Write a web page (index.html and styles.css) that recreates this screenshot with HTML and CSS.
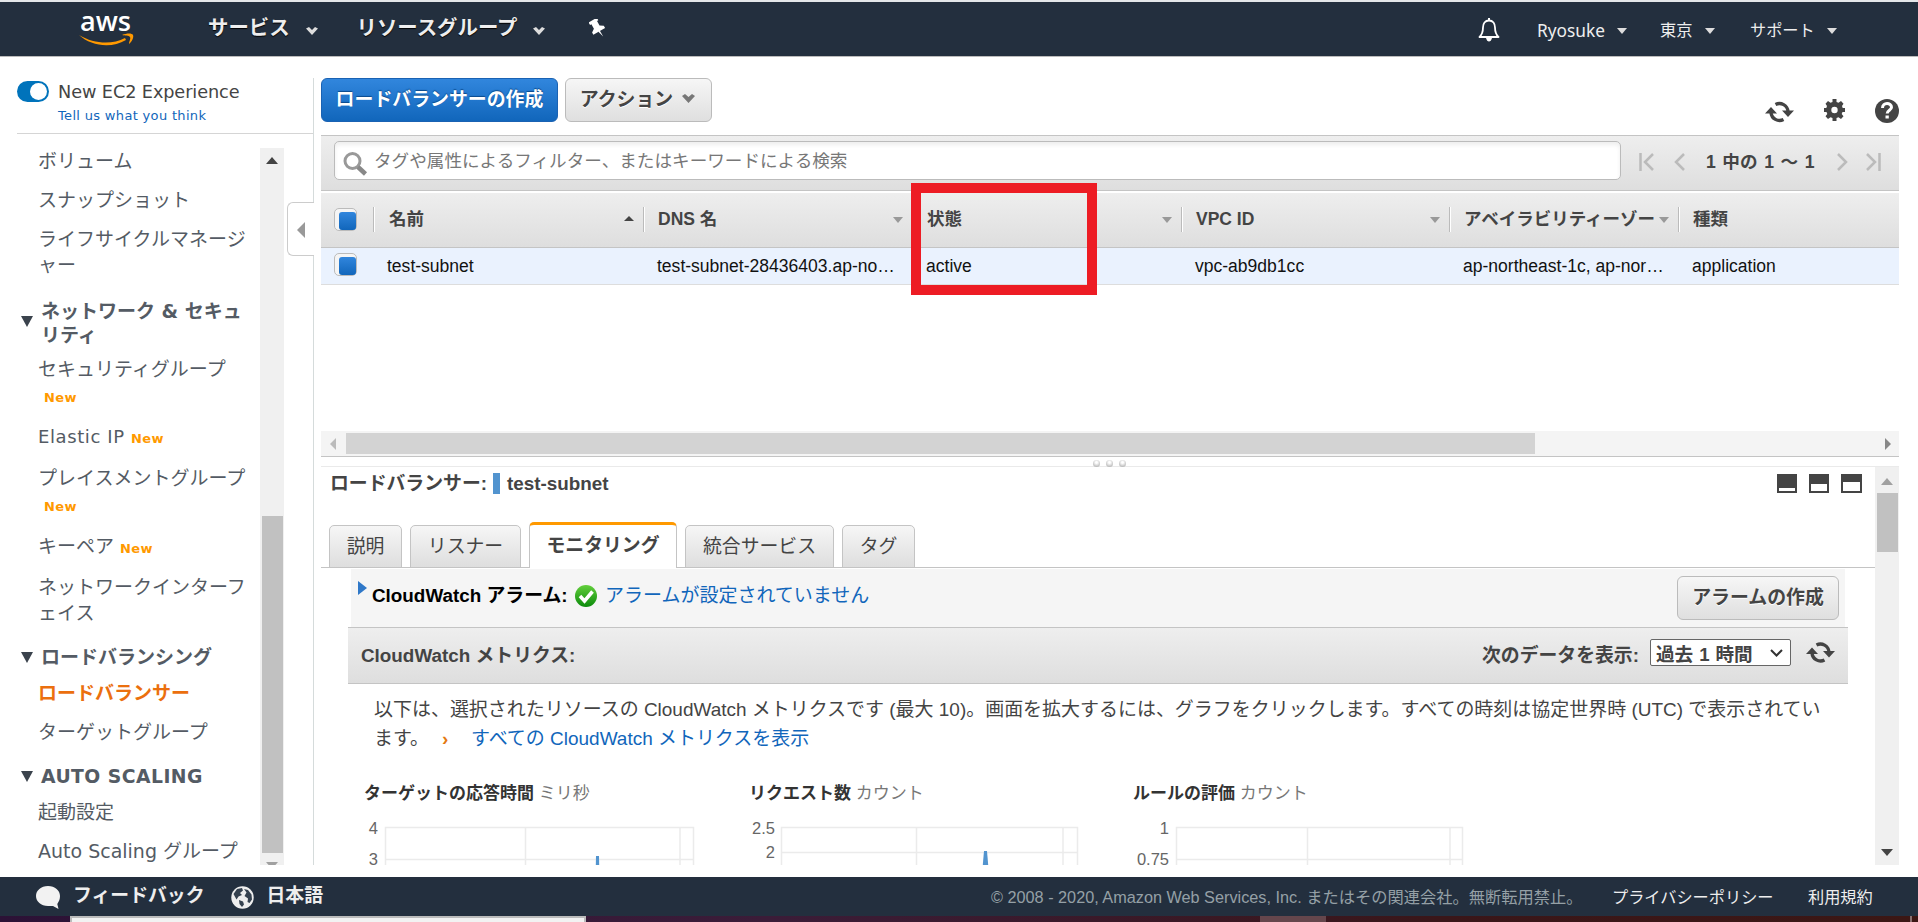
FILE: index.html
```html
<!DOCTYPE html>
<html lang="ja">
<head>
<meta charset="utf-8">
<title>EC2 Management Console</title>
<link rel="stylesheet" href="styles.css">
</head>
<body>
<svg class="defs" width="0" height="0">
  <defs>
    <linearGradient id="glow" x1="0" y1="0" x2="0" y2="1"><stop offset="0" stop-color="#63cf3c"/><stop offset="1" stop-color="#0b8a0b"/></linearGradient>
    <symbol id="refresh" viewBox="0 0 29 22">
      <path d="M10.500 3.500A8.600 8.600 0 0 1 23 10.500M18.500 18.500A8.600 8.600 0 0 1 6 11.500" fill="none" stroke="#444" stroke-width="3.300"/>
      <path d="M0 12.500 6 6l6 6.500zM17 9.500h12L23 16z" fill="#444"/>
    </symbol>
    <symbol id="down" viewBox="0 0 12 8"><path d="M0 1.500 3 0 6 3 9 0 12 1.500 6 8z" fill="#ddd"/></symbol>
  </defs>
</svg>

<header class="nav">
  <svg class="aws" width="56" height="33" viewBox="0 0 56 33">
    <text class="aws-word" x="1" y="18" textLength="51" lengthAdjust="spacingAndGlyphs">aws</text>
    <path d="M0 22c15 9 33 10 46 3l1 2C32 36 12 33 0 22z" fill="#f90"/>
    <path d="M43 22c5-2 10-2 11 0s-1 7-4 9c0-3 2-5 1-7s-5-1-8-2z" fill="#f90"/>
  </svg>
  <div class="menu">サービス<svg width="12" height="8"><use href="#down"/></svg></div>
  <div class="menu menu2">リソースグループ<svg width="12" height="8"><use href="#down"/></svg></div>
  <svg class="pin" width="18" height="20" viewBox="0 0 18 20"><g transform="rotate(-30 8 9)" fill="#fff"><path d="M3.500 0h9.500v3h-1.500v5l3.500 2.500V13H1.500v-2.500L5 8V3H3.500z"/><path d="M7.300 12.500h1.800v7z"/></g></svg>
  <span class="grow"></span>
  <svg class="bell" width="22" height="24" viewBox="0 0 22 24"><path d="M11 2.500c-4 0-6 3-6 7 0 5-1 7-3.500 9.500h19c-2.500-2.500-3.500-4.500-3.500-9.500 0-4-2-7-6-7z" fill="none" stroke="#fff" stroke-width="1.8" stroke-linejoin="round"/><path d="M10 0h2v3h-2zM8 20h6q-1 3.500-3 3.500T8 20z" fill="#fff"/></svg>
  <div class="umenu u1"><span>Ryosuke</span><i></i></div>
  <div class="umenu u2"><span>東京</span><i></i></div>
  <div class="umenu u3"><span>サポート</span><i></i></div>
</header>

<main class="main">
  <aside class="side">
    <div class="exp">
      <span class="toggle"><b></b></span>
      <div><div class="exp-t">New EC2 Experience</div><div class="exp-l">Tell us what you think</div></div>
    </div>
    <div class="side-body">
      <nav class="tree">
        <div class="it h39">ボリューム</div>
        <div class="it h39">スナップショット</div>
        <div class="it two">ライフサイクルマネージ<br>ャー</div>
        <div class="grp g2"><i></i><span>ネットワーク &amp; セキュ<br>リティ</span></div>
        <div class="it h35">セキュリティグループ</div>
        <div class="nw">New</div>
        <div class="it h40">Elastic IP <em>New</em></div>
        <div class="it h35">プレイスメントグループ</div>
        <div class="nw n2">New</div>
        <div class="it h39">キーペア <em>New</em></div>
        <div class="it two t2">ネットワークインターフ<br>ェイス</div>
        <div class="grp g3"><i></i><span>ロードバランシング</span></div>
        <div class="it h39 on">ロードバランサー</div>
        <div class="it h39">ターゲットグループ</div>
        <div class="grp g4"><i></i><span class="latin">AUTO SCALING</span></div>
        <div class="it h39">起動設定</div>
        <div class="it h39">Auto Scaling グループ</div>
      </nav>
      <div class="vbar side-bar"><i class="up dark"></i><b></b><i class="dn"></i></div>
    </div>
    <div class="handle"><i></i></div>
  </aside>

  <section class="work">
    <div class="tools">
      <button class="btn blue">ロードバランサーの作成</button>
      <button class="btn act">アクション<svg width="13" height="9" viewBox="0 0 13 9"><path d="M0 2 3 0 6.500 3 10 0 13 2 6.500 9z" fill="#777"/></svg></button>
      <span class="grow"></span>
      <div class="ticons">
        <svg width="29" height="22"><use href="#refresh"/></svg>
        <svg class="gear" width="21" height="22" viewBox="0 0 21 22"><path fill="#444" fill-rule="evenodd" d="M8.500 0h4v3l2 .8L17 2l2.500 2.700L18 7l.700 2H21v4h-2.500l-.8 2 1.800 2.300L17 20l-2.500-1.800-2 .8v3h-4v-3l-2-.8L4 20l-2.500-2.700L3.300 15l-.8-2H0V9h2.300L3 7 1.500 4.700 4 2l2.500 1.800 2-.8zM10.500 7.800a3.200 3.200 0 1 0 0 6.400 3.200 3.200 0 0 0 0-6.400z"/></svg>
        <svg width="24" height="24" viewBox="0 0 24 24"><circle cx="12" cy="12" r="12" fill="#444"/><path d="M7.500 9c0-6 9-5.500 9-.8 0 3-4.300 3-4.300 6.300" fill="none" stroke="#fff" stroke-width="3"/><path d="M10.500 16.500h3.300v3h-3.300z" fill="#fff"/></svg>
      </div>
    </div>

    <div class="filter">
      <div class="search">
        <svg width="25" height="24" viewBox="0 0 25 24"><circle cx="9.500" cy="9" r="7.500" fill="none" stroke="#999" stroke-width="3"/><path d="m15 15 7.500 7" stroke="#888" stroke-width="4.500"/></svg>
        <span>タグや属性によるフィルター、またはキーワードによる検索</span>
      </div>
      <svg class="pg" width="47" height="18" viewBox="0 0 47 18" fill="none" stroke="#bbb" stroke-width="2.500"><path d="M1.500 0v18M14 1 6 9l8 8M45 1l-8 8 8 8"/></svg>
      <span class="pgt">1 中の 1 ～ 1</span>
      <svg class="pg" width="44" height="18" viewBox="0 0 44 18" fill="none" stroke="#bbb" stroke-width="2.500"><path d="m1 1 8 8-8 8M30 1l8 8-8 8M42.500 0v18"/></svg>
    </div>

    <div class="row head">
      <div class="ck"><i></i></div>
      <div class="c">名前<i class="up"></i></div>
      <div class="c">DNS 名<i class="dn"></i></div>
      <div class="c">状態<i class="dn"></i></div>
      <div class="c">VPC ID<i class="dn"></i></div>
      <div class="c">アベイラビリティーゾー<i class="dn"></i></div>
      <div class="c">種類</div>
      <div class="mark"></div>
    </div>
    <div class="row data">
      <div class="ck"><i></i></div>
      <div class="c">test-subnet</div>
      <div class="c">test-subnet-28436403.ap-no…</div>
      <div class="c">active</div>
      <div class="c">vpc-ab9db1cc</div>
      <div class="c">ap-northeast-1c, ap-nor…</div>
      <div class="c">application</div>
    </div>
    <div class="blank"></div>
    <div class="hbar"><i class="lf"></i><b></b><span class="grow"></span><i class="rt"></i></div>
    <div class="split"><i></i><i></i><i></i></div>

    <div class="detail">
      <div class="pane">
        <div class="title">
          <span class="tt">ロードバランサー:</span><b class="chip"></b><span class="tn">test-subnet</span>
          <span class="grow"></span>
          <div class="wins"><i class="w1"></i><i class="w2"></i><i class="w3"></i></div>
        </div>
        <div class="tabs">
          <div class="tab a">説明</div><div class="tab b">リスナー</div><div class="tab on">モニタリング</div><div class="tab d">統合サービス</div><div class="tab a">タグ</div>
        </div>
        <div class="alarm">
          <i class="exp-i"></i>
          <strong>CloudWatch アラーム:</strong>
          <svg width="22" height="22" viewBox="0 0 22 22"><circle cx="11" cy="11" r="11" fill="url(#glow)"/><path d="m5 11 4.500 5L17.500 6.500" fill="none" stroke="#fff" stroke-width="3.500"/></svg>
          <a>アラームが設定されていません</a>
          <span class="grow"></span>
          <button class="btn mk">アラームの作成</button>
        </div>
        <div class="mbar">
          <span>CloudWatch メトリクス:</span><span class="grow"></span><span>次のデータを表示:</span>
          <div class="sel">過去 1 時間<svg width="13" height="8" viewBox="0 0 13 8"><path d="m1 1 5.500 5.500L12 1" fill="none" stroke="#333" stroke-width="2"/></svg></div>
          <svg width="29" height="23"><use href="#refresh"/></svg>
        </div>
        <div class="note"><p class="p1">以下は、選択されたリソースの CloudWatch メトリクスです (最大 10)。画面を拡大するには、グラフをクリックします。すべての時刻は協定世界時 (UTC) で表示されてい</p><p class="p2">ます。<b>›</b><a>すべての CloudWatch メトリクスを表示</a></p></div>
        <div class="charts">
          <div class="chart c1"><h4>ターゲットの応答時間 <small>ミリ秒</small></h4>
            <svg width="345" height="60"><g class="grid"><path d="M21.500 60V7.500h308V60M161.500 7v53M316 7v53M21.500 39.500h308"/></g><path class="spk" d="m231.500 60 .5-24h3l.5 24z"/><text x="14" y="14">4</text><text x="14" y="45">3</text></svg></div>
          <div class="chart c2"><h4>リクエスト数 <small>カウント</small></h4>
            <svg width="345" height="60"><g class="grid"><path d="M32.500 60V7.500h296V60M167.500 7v53M314 7v53M32.500 32.500h296"/></g><path class="spk" d="m232.500 60 2.500-29h3l2.500 29z"/><text x="26" y="14">2.5</text><text x="26" y="38">2</text></svg></div>
          <div class="chart c3"><h4>ルールの評価 <small>カウント</small></h4>
            <svg width="345" height="60"><g class="grid"><path d="M42.500 60V7.500h286V60M173.500 7v53M316 7v53M42.500 39.500h286"/></g><text x="35" y="14">1</text><text x="35" y="45">0.75</text></svg></div>
        </div>
      </div>
      <div class="vbar det-bar"><i class="up"></i><b></b><span class="grow"></span><i class="dn dark"></i></div>
    </div>
  </section>
</main>

<footer class="foot">
  <svg width="24" height="23" viewBox="0 0 24 23"><path d="M12 0C5 0 0 4.500 0 10s5 10 12 10c2 0 4 0 5 0l5.500 3-1.200-5C23 15.500 24 13 24 10 24 4.500 19 0 12 0z" fill="#f2f2f2"/></svg>
  <span class="fb">フィードバック</span>
  <svg class="globe" width="23" height="23" viewBox="0 0 23 23"><circle cx="11.500" cy="11.500" r="11.200" fill="#eee"/><path d="M2.500 8 6 3l5-1 1 2.500L9 7l2 2-3.500 1.500-2 3zM13 3l4 1 3.500 4.500.5 5-2.500 3.500-2-1 .5-3.500-3.500-2.500 2-3.500zM8 14l4 1.500 1 3-2 2.500-2.500-3z" fill="#35414f"/></svg>
  <span class="lang">日本語</span>
  <span class="grow"></span>
  <span class="copy">© 2008 - 2020, Amazon Web Services, Inc. またはその関連会社。無断転用禁止。</span>
  <span class="pp">プライバシーポリシー</span>
  <span class="tos">利用規約</span>
</footer>
<div class="desk"><i class="dk1"></i><i class="dk2"></i><i class="dk3"></i></div>
</body>
</html>
```
FILE: styles.css
```css
* { box-sizing: border-box; }
body { margin: 0; width: 1918px; height: 922px; overflow: hidden; display: flex; flex-direction: column; background: #fff; color: #444; font-family: "Liberation Sans", "Noto Sans CJK JP", sans-serif; font-size: 18.850px; white-space: nowrap; }
.defs { position: absolute; }
svg, i { display: block; flex: none; }
.grow { flex: 1; }
p, h4 { margin: 0; }
a { color: #1166bb; }

/* top navigation */
.nav { height: 57px; flex: none; display: flex; align-items: flex-start; background: #232f3e; border-top: 2px solid #e4e6e9; border-bottom: 1px solid #bbb; padding-left: 79px; }
.aws { margin-top: 11px; overflow: visible; }
.aws-word { font: 600 27px "Open Sans", sans-serif; fill: #fff; }
.menu { display: flex; font-weight: bold; font-size: 20.400px; line-height: 53px; height: 53px; color: #eee; margin-left: 73px; text-shadow: 0 1px 1px #000; }
.menu svg { margin: 25px 0 0 16px; }
.menu2 { margin-left: 39px; }
.pin { margin: 17px 0 0 44px; }
.bell { margin: 16px 37px 0 0; }
.umenu { display: flex; font-size: 16.200px; line-height: 57px; height: 54px; color: #eee; font-family: "Noto Sans", "Noto Sans CJK JP", sans-serif; }
.umenu i { border: 5px solid transparent; border-top: 6px solid #ddd; border-bottom: 0; margin-top: 26px; height: 6px; }
.u1 { width: 123px; } .u1 span { width: 80px; font-size: 17.300px; }
.u2 { width: 90px; } .u2 span { width: 45px; }
.u3 { width: 168px; } .u3 span { width: 77px; }

.main { height: 820px; flex: none; display: flex; }

/* sidebar */
.side { width: 314px; padding-top: 21px; height: 808px; position: relative; }
.side::after { content: ""; position: absolute; right: 0; top: 21px; bottom: 0; border-right: 1px solid #d5dbdb; }
.exp { margin-left: 17px; height: 56px; border-bottom: 1px solid #d5d5d5; display: flex; gap: 9px; font-family: "DejaVu Sans", sans-serif; }
.toggle { width: 32px; height: 21px; border-radius: 11px; background: #0073bb; margin-top: 3px; padding: 2px 2px 0 13px; }
.toggle b { display: block; width: 17px; height: 17px; border-radius: 50%; background: #fff; }
.exp-t { font-size: 17.700px; line-height: 28px; letter-spacing: -.1px; }
.exp-l { font-size: 13px; letter-spacing: .33px; line-height: 20px; color: #1166bb; }
.side-body { display: flex; height: 717px; margin-top: 14px; overflow: hidden; }
.tree { width: 260px; padding-left: 38px; margin-top: -6px; color: #545b64; font-family: "DejaVu Sans", "Noto Sans CJK JP", sans-serif; font-size: 19px; }
.h39 { height: 39px; line-height: 39px; } .h35 { height: 35px; line-height: 35px; } .h40 { height: 41px; line-height: 41px; font-size: 18px; letter-spacing: .6px; margin-top: 7px; }
.h40 + .h35 { margin-top: 4px; }
.two { height: 54px; line-height: 26px; padding-top: 6px; margin-bottom: 25px; }
.t2 { padding-top: 8px; margin-bottom: 20px; }
.nw, .it em { font: bold 13px "DejaVu Sans", sans-serif; color: #f90; letter-spacing: .4px; }
.it em { margin-left: 0; }
.nw { height: 22px; line-height: 22px; padding-left: 6px; }
.n2 { margin-bottom: 9px; }
.grp { display: flex; align-items: center; font-weight: bold; margin-left: -17px; line-height: 24px; }
.grp i { border: 6.500px solid transparent; border-top: 11px solid #3b434d; border-bottom: 0; margin-right: 8px; }
.g2 { height: 48px; margin-bottom: 5px; }
.g2 i { margin-top: -3px; }
.g3 { height: 34px; }
.g4 { height: 35px; margin-top: 7px; }
.g4 + .it { margin-top: -1px; }
.latin { font-size: 18.800px; letter-spacing: .45px; }
.it.on { color: #eb6f0e; font-weight: bold; }
.vbar { width: 24px; background: #f0f0f0; display: flex; flex-direction: column; align-items: center; }
.vbar i { border: 6px solid transparent; }
.vbar .up { border-bottom: 7px solid #a0a0a0; border-top: 0; }
.vbar .dn { border-top: 7px solid #a0a0a0; border-bottom: 0; }
.vbar .up.dark { border-bottom-color: #444; } .vbar .dn.dark { border-top-color: #444; }
.vbar b { width: 21px; background: #c1c1c1; }
.side-bar .up { margin-top: 9px; }
.side-bar b { height: 337px; flex: none; margin: 352px 0 9px; }
.handle { position: absolute; left: 287px; top: 145px; width: 27px; height: 54px; background: #fff; border: 1px solid #ccc; border-right: 0; border-radius: 6px 0 0 6px; z-index: 1; }
.handle i { width: 8px; border: 8px solid transparent; border-right-color: #999; border-left: 0; margin: 19px 0 0 9px; }

/* toolbar */
.work { width: 1578px; margin-left: 7px; height: 808px; display: flex; flex-direction: column; }
.tools { height: 78px; flex: none; display: flex; padding-top: 21px; gap: 7px; }
.btn { height: 44px; border: 1px solid #bbb; border-radius: 6px; background: linear-gradient(#f6f6f6, #dfdfdf); color: #444; font: bold 18.900px/41px "Liberation Sans", "Noto Sans CJK JP", sans-serif; padding: 0; text-shadow: 0 1px 0 #fff; display: flex; justify-content: center; }
.blue { width: 237px; color: #fff; border-color: #1a62b3; background: linear-gradient(#3186dd, #1166bb); text-shadow: 0 -1px 1px #0a4a8c; }
.act { width: 147px; padding-right: 2px; }
.act svg { margin: 15px 0 0 9px; }
.ticons { display: flex; align-items: flex-start; gap: 30px; padding-top: 21px; }
.ticons > :first-child { margin: 2px 0 0 0; }

.filter { height: 56px; flex: none; border-top: 1px solid #c4c4c4; border-bottom: 1px solid #c4c4c4; background: linear-gradient(#eee, #dedede); display: flex; padding: 5px 0 0 13px; }
.search { width: 1287px; height: 39px; border: 1px solid #bbb; border-radius: 5px; background: #fff; box-shadow: inset 0 3px 4px #eee; display: flex; padding: 11px 0 0 8px; margin-right: 18px; }
.search svg { margin-top: -1px; }
.search span { font-size: 17.600px; line-height: 39px; margin: -11px 0 0 6px; color: #777; }
.pg { margin-top: 12px; }
.pgt { font-weight: bold; font-size: 17.600px; word-spacing: 1.700px; line-height: 43px; width: 111px; margin: 0 20px 0 20px; color: #444; }

/* table */
.row { display: grid; grid-template-columns: 52px 270px 269px 269px 268px 229px 221px; }
.head { height: 57px; flex: none; border-top: 2px solid #fff; border-bottom: 1px solid #c4c4c4; background: linear-gradient(#eee, #dedede); font-weight: bold; font-size: 17.500px; position: relative; }
.head .c { border-left: 1px solid #bbb; height: 25px; margin-top: 14px; padding-left: 14px; line-height: 25px; display: flex; justify-content: space-between; box-shadow: inset 1px 0 #fff; }
.head .c:nth-child(2) { padding-left: 15px; }
.head .c i { height: 6px; border: 5.500px solid transparent; margin: 10px 9px 0 0; }
.head .c .up { border-bottom: 5px solid #444; border-top: 0; margin-top: 9px; height: 5px; }
.head .c .dn { border-top: 6px solid #999; border-bottom: 0; }
.ck { padding: 15px 0 0 13px; }
.ck i { width: 23px; height: 23px; border: 1px solid #bbb; border-radius: 5px; background: #f5f5f5; padding: 3px 0 0 4px; }
.ck i::before { content: ""; display: block; width: 17px; height: 18px; border-radius: 3px; background: linear-gradient(#3186dd, #1166bb); }
.data { height: 37px; flex: none; background: #eaf2fe; border-bottom: 1px solid #ddd; color: #111; font-size: 17.550px; line-height: 36px; }
.data .c { padding-left: 14px; }
.data .ck { padding: 5px 0 0 13px; line-height: 0; }
.mark { position: absolute; left: 590px; top: -10px; width: 186px; height: 112px; border: 10px solid #ed1c24; }
.blank { height: 146px; flex: none; }
.hbar { height: 26px; flex: none; background: #f4f4f4; border-bottom: 1px solid #c4c4c4; display: flex; align-items: center; }
.hbar b { width: 1189px; height: 21px; background: #d3d3d3; }
.hbar i { border: 6px solid transparent; }
.hbar .lf { border-right-color: #bbb; border-left: 0; margin: 0 10px 0 9px; }
.hbar .rt { border-left-color: #888; border-right: 0; margin-right: 8px; }
.split { height: 10px; flex: none; border-bottom: 1px solid #eaeaea; display: flex; gap: 6px; padding: 3px 0 0 772px; }
.split i { width: 7px; height: 7px; border-radius: 50%; background: radial-gradient(circle at 50% 35%, #fff 15%, #bbb 75%); }

/* detail pane */
.detail { flex: 1; min-height: 0; display: flex; overflow: hidden; }
.pane { width: 1554px; display: flex; flex-direction: column; }
.title { height: 56px; flex: none; display: flex; font-weight: bold; line-height: 33px; padding-left: 9px; }
.chip { width: 7px; height: 21px; background: #5294cf; margin: 6px 7px 0 6px; }
.wins { display: flex; gap: 12px; padding: 7px 13px 0 0; }
.wins i { width: 20px; height: 19px; border: 2px solid #444; background: #fff; }
.wins .w1 { border-top-width: 14px; } .wins .w2 { border-top-width: 10px; } .wins .w3 { border-top-width: 8px; width: 21px; }
.tabs { height: 45px; flex: none; display: flex; align-items: flex-end; gap: 8px; padding-left: 8px; background: linear-gradient(#c4c4c4, #c4c4c4) bottom / 100% 1px no-repeat; }
.tab { height: 43px; border: 1px solid #c4c4c4; border-radius: 5px 5px 0 0; background: linear-gradient(#f6f6f6, #dedede); text-align: center; line-height: 41px; }
.tab.a { width: 73px; } .b { width: 111px; } .tab.d { width: 149px; }
.tab.on { width: 148px; height: 46px; border-top: 3px solid #f90; border-bottom: 0; background: #fff; font-weight: bold; }
.alarm { height: 59px; flex: none; margin: 1px 30px 1px 30px; background: #f5f5f5; display: flex; padding: 0 6px 0 7px; line-height: 53px; }
.exp-i { border: 7px solid transparent; border-left: 9px solid #2f78c8; border-right: 0; margin: 12px 5px 0 0; height: 14px; }
.alarm strong { color: #000; width: 203px; }
.alarm a { font-size: 19px; }
.alarm > svg { margin: 16px 8px 0 0; }
.mk { width: 162px; margin-top: 7px; }
.mbar { height: 57px; flex: none; margin: -2px 27px 0; border-top: 1px solid #c4c4c4; border-bottom: 1px solid #c4c4c4; background: linear-gradient(#eee, #dedede); display: flex; padding: 0 13px 0 13px; font-weight: bold; line-height: 55px; }
.sel { margin: 11px 15px 0 11px; width: 141px; height: 27px; border: 1px solid #666; border-radius: 2px; background: #fff; line-height: 29px; padding: 0 7px 0 5px; display: flex; justify-content: space-between; font-size: 18.600px; word-spacing: .8px; }
.sel svg { margin-top: 9px; }
.mbar > svg { margin-top: 13px; }
.note { padding: 11px 0 0 53px; height: 98px; flex: none; line-height: 29px; font-size: 18.980px; }
.p2 { display: flex; }
.p2 b { color: #e47911; width: 28px; padding-left: 13px; }
.p2 a { margin-left: 14px; }
.charts { display: flex; padding-left: 43px; }
.chart { width: 385px; flex: none; }
.c3 { margin-left: -1px; }
.c3 svg { margin-left: 1px; }
.chart h4 { font-size: 17px; line-height: 24px; height: 38px; color: #333; }
.chart small { font-size: 17px; font-weight: normal; color: #777; }
.chart text { font-size: 16.500px; fill: #666; text-anchor: end; }
.grid { fill: none; stroke: #ebebeb; stroke-width: 1.5; }
.spk { fill: #5294cf; }
.det-bar { height: 399px; }
.det-bar .up { margin: 11px 0 8px; }
.det-bar b { height: 59px; }
.det-bar .dn { margin-bottom: 10px; }

/* footer */
.foot { height: 39px; flex: none; background: #232f3e; display: flex; color: #eee; line-height: 38px; padding-left: 36px; }
.foot svg { margin-top: 9px; }
.fb, .lang { font-weight: bold; margin-left: 13px; }
.globe { margin-left: 26px; }
.copy { font-size: 16.250px; color: #95a0a6; line-height: 41px; width: 621px; }
.pp { font-size: 16.200px; line-height: 41px; width: 196px; }
.tos { font-size: 16.200px; line-height: 41px; width: 110px; }
.desk { height: 6px; background: linear-gradient(90deg, #2c1236, #3b1c38 40%, #3a1619 75%, #3c1714); display: flex; padding-left: 70px; }
.dk1 { width: 516px; border: 2px solid #bbb; border-bottom: 0; background: #f2f2f2; }
.dk2 { width: 66px; margin-left: 674px; background: #65464c; }
.dk3 { width: 2px; margin-left: 584px; background: #8a7070; }
```
